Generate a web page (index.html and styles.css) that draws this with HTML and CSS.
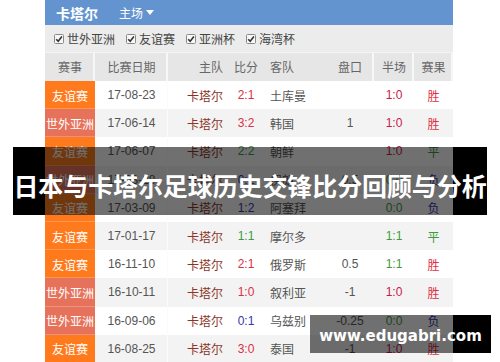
FILE: index.html
```html
<!DOCTYPE html>
<html lang="zh">
<head>
<meta charset="utf-8">
<title>卡塔尔 主场</title>
<link rel="stylesheet" href="styles.css">
</head>
<body>
<div class="page">
  <div class="board">
    <div class="topbar">
      <span class="team">卡塔尔</span>
      <span class="venue">主场<svg class="caret" width="8" height="5" viewBox="0 0 8 5"><path d="M0 0H8L4 5Z" fill="#fff"/></svg></span>
    </div>
    <div class="filters">
      <label class="filter"><svg class="box" width="10" height="10" viewBox="0 0 10 10"><rect x="0.5" y="0.5" width="9" height="9" rx="1" fill="#f7f7f7" stroke="#8a8a8a"/><path d="M2.2 5.2L4.2 7.2L7.9 2.6" fill="none" stroke="#333" stroke-width="1.6"/></svg>世外亚洲</label>
      <label class="filter"><svg class="box" width="10" height="10" viewBox="0 0 10 10"><rect x="0.5" y="0.5" width="9" height="9" rx="1" fill="#f7f7f7" stroke="#8a8a8a"/><path d="M2.2 5.2L4.2 7.2L7.9 2.6" fill="none" stroke="#333" stroke-width="1.6"/></svg>友谊赛</label>
      <label class="filter"><svg class="box" width="10" height="10" viewBox="0 0 10 10"><rect x="0.5" y="0.5" width="9" height="9" rx="1" fill="#f7f7f7" stroke="#8a8a8a"/><path d="M2.2 5.2L4.2 7.2L7.9 2.6" fill="none" stroke="#333" stroke-width="1.6"/></svg>亚洲杯</label>
      <label class="filter"><svg class="box" width="10" height="10" viewBox="0 0 10 10"><rect x="0.5" y="0.5" width="9" height="9" rx="1" fill="#f7f7f7" stroke="#8a8a8a"/><path d="M2.2 5.2L4.2 7.2L7.9 2.6" fill="none" stroke="#333" stroke-width="1.6"/></svg>海湾杯</label>
    </div>
    <table class="matches">
      <colgroup>
        <col class="c-evt"><col class="c-date"><col class="c-home"><col class="c-score"><col class="c-away"><col class="c-line"><col class="c-half"><col class="c-res">
      </colgroup>
      <thead>
        <tr>
          <th class="sep">赛事</th><th class="sep">比赛日期</th><th class="home">主队</th><th>比分</th><th class="away">客队</th><th class="sep">盘口</th><th class="sep">半场</th><th class="sep">赛果</th>
        </tr>
      </thead>
      <tbody>
        <tr><td class="evt friendly">友谊赛</td><td class="date">17-08-23</td><td class="home">卡塔尔</td><td class="score w">2:1</td><td class="away">土库曼</td><td class="line"></td><td class="half r">1:0</td><td class="res w">胜</td></tr>
        <tr><td class="evt wcq">世外亚洲</td><td class="date">17-06-14</td><td class="home">卡塔尔</td><td class="score w">3:2</td><td class="away">韩国</td><td class="line">1</td><td class="half r">1:0</td><td class="res w">胜</td></tr>
        <tr><td class="evt friendly">友谊赛</td><td class="date">17-06-07</td><td class="home">卡塔尔</td><td class="score d">2:2</td><td class="away">朝鲜</td><td class="line"></td><td class="half r">1:0</td><td class="res d">平</td></tr>
        <tr><td class="evt wcq">世外亚洲</td><td class="date">17-03-28</td><td class="home">卡塔尔</td><td class="score l">0:1</td><td class="away">伊朗</td><td class="line">0.5</td><td class="half d">0:0</td><td class="res l">负</td></tr>
        <tr><td class="evt friendly">友谊赛</td><td class="date">17-03-09</td><td class="home">卡塔尔</td><td class="score l">1:2</td><td class="away">阿塞拜</td><td class="line"></td><td class="half d">0:0</td><td class="res l">负</td></tr>
        <tr><td class="evt friendly">友谊赛</td><td class="date">17-01-17</td><td class="home">卡塔尔</td><td class="score d">1:1</td><td class="away">摩尔多</td><td class="line"></td><td class="half d">1:1</td><td class="res d">平</td></tr>
        <tr><td class="evt friendly">友谊赛</td><td class="date">16-11-10</td><td class="home">卡塔尔</td><td class="score w">2:1</td><td class="away">俄罗斯</td><td class="line">0.5</td><td class="half d">1:1</td><td class="res w">胜</td></tr>
        <tr><td class="evt wcq">世外亚洲</td><td class="date">16-10-11</td><td class="home">卡塔尔</td><td class="score w">1:0</td><td class="away">叙利亚</td><td class="line">-1</td><td class="half r">1:0</td><td class="res w">胜</td></tr>
        <tr><td class="evt wcq">世外亚洲</td><td class="date">16-09-06</td><td class="home">卡塔尔</td><td class="score l">0:1</td><td class="away">乌兹别</td><td class="line">-0.25</td><td class="half d">0:0</td><td class="res l">负</td></tr>
        <tr><td class="evt friendly">友谊赛</td><td class="date">16-08-25</td><td class="home">卡塔尔</td><td class="score w">3:0</td><td class="away">泰国</td><td class="line">-1</td><td class="half r">1:0</td><td class="res w">胜</td></tr>
      </tbody>
    </table>
  </div>
  <div class="banner">日本与卡塔尔足球历史交锋比分回顾与分析</div>
  <div class="watermark">www.edugabri.com</div>
</div>
</body>
</html>
```

FILE: styles.css
```css
html, body {
  margin: 0;
  padding: 0;
  background: #fff;
}

.page {
  position: relative;
  width: 500px;
  height: 362px;
  overflow: hidden;
  font-family: "Liberation Sans", "Noto Sans CJK SC", sans-serif;
  font-size: 12px;
  color: #555;
}

.board {
  margin-left: 45px;
  width: 408px;
}

.topbar {
  height: 25px;
  background: #6394cf;
  display: flex;
  align-items: center;
  padding-left: 11px;
  color: #fff;
}

.team {
  font-family: "Noto Sans CJK SC", sans-serif;
  font-weight: 700;
  font-size: 14px;
  line-height: 1;
}

.venue {
  margin-left: 21px;
  font-family: "Noto Sans CJK SC", sans-serif;
  font-size: 12px;
  display: flex;
  align-items: center;
  gap: 3px;
}

.caret {
  display: block;
}

.filters {
  height: 27px;
  background: #ececec;
  display: flex;
  align-items: center;
  gap: 11px;
  padding-left: 9px;
  color: #444;
  font-family: "Noto Sans CJK SC", sans-serif;
}

.filter {
  display: flex;
  align-items: center;
  gap: 3px;
}

.box {
  display: block;
}

.matches {
  width: 408px;
  border-collapse: collapse;
  table-layout: fixed;
}

.c-evt { width: 50px; }
.c-date { width: 73px; }
.c-home { width: 62px; }
.c-score { width: 32px; }
.c-away { width: 64px; }
.c-line { width: 48px; }
.c-half { width: 40px; }
.c-res { width: 39px; }

.matches th {
  height: 29px;
  padding: 0;
  background: #e6e6e6;
  box-shadow: inset 0 1px #f4f4f4;
  font-weight: 400;
  color: #666;
  font-family: "Noto Sans CJK SC", sans-serif;
  text-align: center;
}

.matches th.sep {
  box-shadow: inset 0 1px #f4f4f4, inset -2px 0 #f7f7f7;
}

.matches th.home,
.matches td.home {
  text-align: right;
  padding-right: 7px;
}

.matches th.away,
.matches td.away {
  text-align: left;
  padding-left: 8px;
}

.matches td {
  height: 28.2px;
  padding: 0;
  text-align: center;
  white-space: nowrap;
}

.matches tbody tr:nth-child(even) td {
  background: #f3f3f3;
}

.matches tbody tr td.date {
  box-shadow: inset -1px 0 #fbfbfb;
}

.matches td.evt {
  color: #fff;
  font-family: "Noto Sans CJK SC", sans-serif;
  box-shadow: inset 0 -1px rgba(255, 255, 255, 0.22);
}

.matches tbody tr td.friendly {
  background: #ff7a1c;
}

.matches tbody tr td.wcq {
  background: #e6725b;
}

.date {
  color: #555;
}

.matches td.home {
  color: #8a3426;
}

.away,
.line {
  color: #555;
}

.score.w, .res.w { color: #dc2f45; }
.score.d, .res.d { color: #3f9a3f; }
.score.l, .res.l { color: #3636ab; }

.half.r { color: #c9184e; }
.half.d { color: #3f9a3f; }

.banner {
  position: absolute;
  left: 13px;
  top: 147px;
  width: 474px;
  height: 68px;
  background: linear-gradient(to right, #000 0, #000 32px, rgba(0, 0, 0, 0.56) 32px, rgba(0, 0, 0, 0.56) 440px, #000 440px, #000 100%);
  color: #fff;
  font-family: "Noto Sans CJK SC", sans-serif;
  font-weight: 700;
  font-size: 25px;
  letter-spacing: -0.1px;
  white-space: nowrap;
  display: flex;
  align-items: center;
  justify-content: center;
  padding-top: 8px;
  box-sizing: border-box;
}

.watermark {
  position: absolute;
  left: 310px;
  top: 315px;
  width: 181px;
  height: 38px;
  background: linear-gradient(to right, rgba(0, 0, 0, 0.56) 0, rgba(0, 0, 0, 0.56) 143px, #000 143px, #000 100%);
  color: #fff;
  font-family: "DejaVu Sans", sans-serif;
  font-weight: 700;
  font-size: 15px;
  white-space: nowrap;
  display: flex;
  align-items: center;
  justify-content: center;
  padding-top: 4px;
  box-sizing: border-box;
}
```
